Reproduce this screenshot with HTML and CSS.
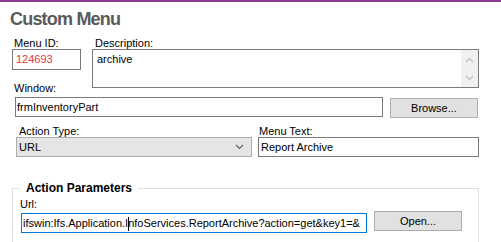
FILE: index.html
```html
<!DOCTYPE html>
<html lang="en">
<head>
    <meta charset="UTF-8">
    <meta name="viewport" content="width=device-width, initial-scale=1.0">
    <title>Custom Menu</title>
    <link rel="stylesheet" href="styles.css">
</head>
<body>
    <div class="topbar"></div>
    <h1 class="title">Custom Menu</h1>

    <div class="form">
        <div class="row row-ids">
            <div class="field f-id">
                <label>Menu ID:</label>
                <div class="box id-box">124693</div>
            </div>
            <div class="field f-desc">
                <label>Description:</label>
                <div class="box desc-box">
                    <span class="desc-text">archive</span>
                    <div class="vscroll">
                        <svg width="9" height="6" viewBox="0 0 9 6"><polyline points="1,5 4.5,1.5 8,5" fill="none" stroke="#c2c2c2" stroke-width="1.3"/></svg>
                        <svg width="9" height="6" viewBox="0 0 9 6"><polyline points="1,1 4.5,4.5 8,1" fill="none" stroke="#c2c2c2" stroke-width="1.3"/></svg>
                    </div>
                </div>
            </div>
        </div>

        <div class="row row-window">
            <div class="field f-window">
                <label>Window:</label>
                <div class="box window-box">frmInventoryPart</div>
            </div>
            <button class="btn btn-browse">Browse...</button>
        </div>

        <div class="row row-action">
            <div class="field f-type">
                <label>Action Type:</label>
                <div class="combo">
                    <span>URL</span>
                    <svg width="9" height="6" viewBox="0 0 9 6"><polyline points="1,1 4.5,4.5 8,1" fill="none" stroke="#606060" stroke-width="1.1"/></svg>
                </div>
            </div>
            <div class="field f-text">
                <label>Menu Text:</label>
                <div class="box text-box">Report Archive</div>
            </div>
        </div>

        <fieldset class="group">
            <legend>Action Parameters</legend>
            <div class="row row-url">
                <div class="field f-url">
                    <label>Url:</label>
                    <div class="box url-box">ifswin:Ifs.Application.I<span class="caret"></span>nfoServices.ReportArchive?action=get&amp;key1=&amp;</div>
                </div>
                <button class="btn btn-open">Open...</button>
            </div>
        </fieldset>
    </div>
</body>
</html>
```

FILE: styles.css
```css
html, body {
    overflow: hidden;
}

body {
    margin: 0;
    background-color: #ffffff;
    font-family: 'Liberation Sans', Arial, sans-serif;
    font-size: 11px;
    color: #000000;
}

.topbar {
    height: 2px;
    background-color: #8a3d8e;
}

.title {
    margin: 7px 0 0 10px;
    font-family: 'Liberation Sans', Arial, sans-serif;
    font-size: 18px;
    font-weight: bold;
    letter-spacing: -0.8px;
    line-height: 20px;
    color: #5a5a5a;
}

.form {
    margin-top: 9px;
}

.row {
    display: flex;
    align-items: flex-start;
}

.field {
    display: flex;
    flex-direction: column;
}

label {
    display: block;
    line-height: 11px;
    white-space: nowrap;
}

.box {
    box-sizing: border-box;
    height: 20px;
    border: 1px solid #7a7a7a;
    background-color: #ffffff;
    line-height: 18px;
    white-space: nowrap;
    overflow: hidden;
}

/* first row */
.row-ids {
    margin-bottom: -5px;
}

.f-id {
    margin-left: 12px;
}

.f-id label {
    padding-left: 2px;
}

.id-box {
    width: 69px;
    height: 21px;
    line-height: 19px;
    padding-left: 3px;
    color: #e0393e;
}

.f-desc {
    margin-left: 11px;
}

.f-desc label {
    padding-left: 3px;
}

.desc-box {
    display: flex;
    width: 387px;
    height: 39px;
    line-height: 13px;
}

.desc-text {
    flex: 1;
    padding: 3px 4px;
}

.vscroll {
    width: 17px;
    background-color: #f0f0f0;
    display: flex;
    flex-direction: column;
    align-items: center;
    justify-content: space-between;
    padding: 7px 0 6px;
    box-sizing: border-box;
}

.vscroll svg {
    display: block;
}

/* window row */
.row-window {
    align-items: flex-end;
}

.f-window {
    margin-left: 14px;
}

.f-window label {
    margin-bottom: 3px;
}

.window-box {
    margin-left: 1px;
    width: 368px;
    padding-left: 1px;
}

.btn {
    box-sizing: border-box;
    width: 88px;
    height: 20px;
    padding: 0;
    border: 1px solid #adadad;
    background-color: #e1e1e1;
    font-family: 'Liberation Sans', Arial, sans-serif;
    font-size: 11px;
    color: #000000;
}

.btn-browse {
    margin: 0 0 -1px 7px;
}

/* action row */
.row-action {
    margin-top: 9px;
}

.f-type {
    margin-left: 16px;
}

.f-type label {
    padding-left: 3px;
}

.combo {
    box-sizing: border-box;
    width: 236px;
    height: 20px;
    border: 1px solid #adadad;
    background-color: #e5e5e5;
    display: flex;
    align-items: center;
    justify-content: space-between;
    padding: 0 7px 0 2px;
}

.f-text {
    margin-left: 6px;
}

.f-text label {
    padding-left: 1px;
}

.text-box {
    width: 221px;
    padding-left: 2px;
}

/* action parameters group */
.group {
    margin: 24px 0 0 12px;
    width: 467px;
    box-sizing: border-box;
    border: 1px solid #dfdfdf;
    border-bottom: none;
    padding: 4px 7px 9px;
}

.group legend {
    padding: 0 6px;
    font-size: 12px;
    font-weight: bold;
    line-height: 14px;
}

.row-url {
    align-items: flex-end;
}

.f-url label {
    margin-bottom: 3px;
}

.url-box {
    margin-left: 1px;
    width: 346px;
    border-color: #0078d7;
    padding-left: 1px;
}

.caret {
    display: inline-block;
    width: 1px;
    height: 14px;
    margin-right: -1px;
    background-color: #000000;
    vertical-align: middle;
}

.btn-open {
    margin: 0 0 2px 7px;
}
```
